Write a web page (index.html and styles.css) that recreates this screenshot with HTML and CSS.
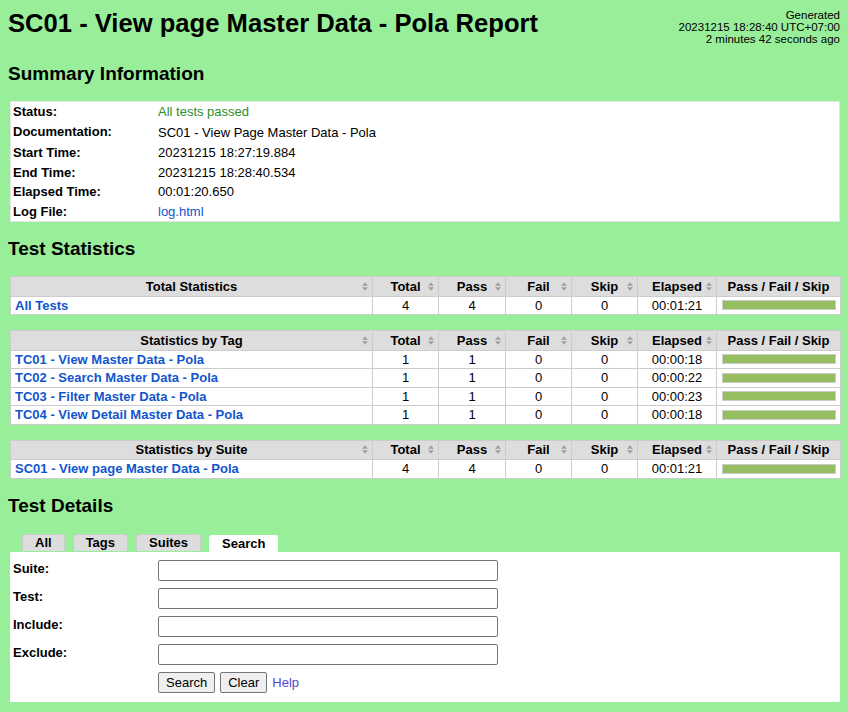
FILE: index.html
```html
<!DOCTYPE html>
<html>
<head>
<meta charset="utf-8">
<title>SC01 - View page Master Data - Pola Report</title>
<link rel="stylesheet" href="styles.css">
</head>
<body>
<div class="header">
  <h1>SC01 - View page Master Data - Pola Report</h1>
  <div class="generated">Generated<br>20231215 18:28:40 UTC+07:00<br>2 minutes 42 seconds ago</div>
</div>

<h2>Summary Information</h2>
<table class="details">
  <tr><th>Status:</th><td class="pass">All tests passed</td></tr>
  <tr class="doc"><th>Documentation:</th><td><div class="doc-text">SC01 - View Page Master Data - Pola</div></td></tr>
  <tr><th>Start Time:</th><td>20231215 18:27:19.884</td></tr>
  <tr><th>End Time:</th><td>20231215 18:28:40.534</td></tr>
  <tr><th>Elapsed Time:</th><td>00:01:20.650</td></tr>
  <tr><th>Log File:</th><td><a href="#">log.html</a></td></tr>
</table>

<h2>Test Statistics</h2>
<table class="statistics">
  <colgroup><col class="c-name"><col class="c-num"><col class="c-pass"><col class="c-num"><col class="c-num"><col class="c-el"><col class="c-graph"></colgroup>
  <tr>
    <th class="sortable">Total Statistics<svg class="sort" viewBox="0 0 7 10"><path d="M0 4L3.5 0L7 4Z M0 6L3.5 10L7 6Z"/></svg></th>
    <th class="sortable">Total<svg class="sort" viewBox="0 0 7 10"><path d="M0 4L3.5 0L7 4Z M0 6L3.5 10L7 6Z"/></svg></th>
    <th class="sortable">Pass<svg class="sort" viewBox="0 0 7 10"><path d="M0 4L3.5 0L7 4Z M0 6L3.5 10L7 6Z"/></svg></th>
    <th class="sortable">Fail<svg class="sort" viewBox="0 0 7 10"><path d="M0 4L3.5 0L7 4Z M0 6L3.5 10L7 6Z"/></svg></th>
    <th class="sortable">Skip<svg class="sort" viewBox="0 0 7 10"><path d="M0 4L3.5 0L7 4Z M0 6L3.5 10L7 6Z"/></svg></th>
    <th class="sortable">Elapsed<svg class="sort" viewBox="0 0 7 10"><path d="M0 4L3.5 0L7 4Z M0 6L3.5 10L7 6Z"/></svg></th>
    <th>Pass / Fail / Skip</th>
  </tr>
  <tr><td class="name"><a href="#">All Tests</a></td><td>4</td><td>4</td><td>0</td><td>0</td><td>00:01:21</td><td><div class="graph"><div class="pass-bar"></div></div></td></tr>
</table>

<table class="statistics">
  <colgroup><col class="c-name"><col class="c-num"><col class="c-pass"><col class="c-num"><col class="c-num"><col class="c-el"><col class="c-graph"></colgroup>
  <tr>
    <th class="sortable">Statistics by Tag<svg class="sort" viewBox="0 0 7 10"><path d="M0 4L3.5 0L7 4Z M0 6L3.5 10L7 6Z"/></svg></th>
    <th class="sortable">Total<svg class="sort" viewBox="0 0 7 10"><path d="M0 4L3.5 0L7 4Z M0 6L3.5 10L7 6Z"/></svg></th>
    <th class="sortable">Pass<svg class="sort" viewBox="0 0 7 10"><path d="M0 4L3.5 0L7 4Z M0 6L3.5 10L7 6Z"/></svg></th>
    <th class="sortable">Fail<svg class="sort" viewBox="0 0 7 10"><path d="M0 4L3.5 0L7 4Z M0 6L3.5 10L7 6Z"/></svg></th>
    <th class="sortable">Skip<svg class="sort" viewBox="0 0 7 10"><path d="M0 4L3.5 0L7 4Z M0 6L3.5 10L7 6Z"/></svg></th>
    <th class="sortable">Elapsed<svg class="sort" viewBox="0 0 7 10"><path d="M0 4L3.5 0L7 4Z M0 6L3.5 10L7 6Z"/></svg></th>
    <th>Pass / Fail / Skip</th>
  </tr>
  <tr><td class="name"><a href="#">TC01 - View Master Data - Pola</a></td><td>1</td><td>1</td><td>0</td><td>0</td><td>00:00:18</td><td><div class="graph"><div class="pass-bar"></div></div></td></tr>
  <tr><td class="name"><a href="#">TC02 - Search Master Data - Pola</a></td><td>1</td><td>1</td><td>0</td><td>0</td><td>00:00:22</td><td><div class="graph"><div class="pass-bar"></div></div></td></tr>
  <tr><td class="name"><a href="#">TC03 - Filter Master Data - Pola</a></td><td>1</td><td>1</td><td>0</td><td>0</td><td>00:00:23</td><td><div class="graph"><div class="pass-bar"></div></div></td></tr>
  <tr><td class="name"><a href="#">TC04 - View Detail Master Data - Pola</a></td><td>1</td><td>1</td><td>0</td><td>0</td><td>00:00:18</td><td><div class="graph"><div class="pass-bar"></div></div></td></tr>
</table>

<table class="statistics">
  <colgroup><col class="c-name"><col class="c-num"><col class="c-pass"><col class="c-num"><col class="c-num"><col class="c-el"><col class="c-graph"></colgroup>
  <tr>
    <th class="sortable">Statistics by Suite<svg class="sort" viewBox="0 0 7 10"><path d="M0 4L3.5 0L7 4Z M0 6L3.5 10L7 6Z"/></svg></th>
    <th class="sortable">Total<svg class="sort" viewBox="0 0 7 10"><path d="M0 4L3.5 0L7 4Z M0 6L3.5 10L7 6Z"/></svg></th>
    <th class="sortable">Pass<svg class="sort" viewBox="0 0 7 10"><path d="M0 4L3.5 0L7 4Z M0 6L3.5 10L7 6Z"/></svg></th>
    <th class="sortable">Fail<svg class="sort" viewBox="0 0 7 10"><path d="M0 4L3.5 0L7 4Z M0 6L3.5 10L7 6Z"/></svg></th>
    <th class="sortable">Skip<svg class="sort" viewBox="0 0 7 10"><path d="M0 4L3.5 0L7 4Z M0 6L3.5 10L7 6Z"/></svg></th>
    <th class="sortable">Elapsed<svg class="sort" viewBox="0 0 7 10"><path d="M0 4L3.5 0L7 4Z M0 6L3.5 10L7 6Z"/></svg></th>
    <th>Pass / Fail / Skip</th>
  </tr>
  <tr><td class="name"><a href="#">SC01 - View page Master Data - Pola</a></td><td>4</td><td>4</td><td>0</td><td>0</td><td>00:01:21</td><td><div class="graph"><div class="pass-bar"></div></div></td></tr>
</table>

<h2>Test Details</h2>
<div class="tabs">
  <div class="tab">All</div>
  <div class="tab">Tags</div>
  <div class="tab">Suites</div>
  <div class="tab active">Search</div>
</div>
<div class="panel">
  <form class="search">
    <label>Suite:</label><input type="text">
    <label>Test:</label><input type="text">
    <label>Include:</label><input type="text">
    <label>Exclude:</label><input type="text">
    <span></span>
    <div class="buttons">
      <button type="button">Search</button>
      <button type="button">Clear</button>
      <a class="help" href="#">Help</a>
    </div>
  </form>
</div>
</body>
</html>
```

FILE: styles.css
```css
html, body {
  background: #99ee99;
}
body {
  margin: 0;
  padding: 0 8px;
  color: #000;
  font-family: "Liberation Sans", Arial, Helvetica, sans-serif;
  font-size: 13px;
}
a {
  color: #15c;
  text-decoration: none;
}
.header {
  display: flex;
  justify-content: space-between;
  align-items: flex-start;
  padding-top: 8px;
  margin-bottom: 18px;
}
h1 {
  margin: 0;
  font-size: 25.6px;
  line-height: 30px;
  font-weight: bold;
  white-space: nowrap;
}
.generated {
  font-size: 11.5px;
  line-height: 12px;
  text-align: right;
  white-space: nowrap;
  padding-top: 1px;
}
h2 {
  margin: 16px 0;
  font-size: 19px;
  line-height: 22px;
  font-weight: bold;
}

/* summary */
.details {
  margin-left: 2px;
  width: 830px;
  background: #fff;
  border-collapse: collapse;
  border: 1px solid #e4e4e4;
  margin-bottom: 12px;
}
.details th {
  width: 137px;
  text-align: left;
  vertical-align: top;
  padding: 2px 4px 2px 2px;
  line-height: 15.5px;
  font-weight: bold;
  white-space: nowrap;
}
.details td {
  vertical-align: top;
  padding: 2px 4px;
  line-height: 15.5px;
}
.details .doc td {
  padding-top: 3px;
  padding-bottom: 3px;
}
.pass {
  color: #2c8f2c;
}

/* statistics */
.statistics {
  margin-left: 2px;
  width: 830px;
  table-layout: fixed;
  border-collapse: collapse;
  background: #fff;
  border: 1px solid #ccc;
  margin-bottom: 15px;
}
.c-name { width: 362px; }
.c-num { width: 66px; }
.c-pass { width: 67px; }
.c-el { width: 79px; }
.c-graph { width: 124px; }
.statistics th {
  position: relative;
  background: #ddd;
  border: 1px solid #ccc;
  font-weight: bold;
  text-align: center;
  padding: 1.5px 4px;
  line-height: 15.5px;
  white-space: nowrap;
}
.statistics td {
  border: 1px solid #ccc;
  text-align: center;
  padding: 1px 4px;
  line-height: 15.5px;
  white-space: nowrap;
}
.statistics td.name {
  text-align: left;
  font-weight: bold;
}
.sort {
  position: absolute;
  right: 4px;
  top: 50%;
  width: 6px;
  height: 9px;
  margin-top: -4.5px;
  fill: #a0a0a0;
}
.graph {
  width: 112px;
  height: 8px;
  margin: 0 auto;
  border: 1px solid #ccc;
  background: #fff;
}
.pass-bar {
  height: 100%;
  background: #97bd61;
}

/* details */
.tabs {
  display: flex;
  gap: 8px;
  padding: 1px 0 0 12px;
  margin-left: 2px;
}
.tab {
  background: #ddd;
  border: 1px solid #ccc;
  border-bottom: none;
  border-radius: 3px 3px 0 0;
  padding: 0 12px;
  font-weight: bold;
  line-height: 16px;
  height: 16px;
}
.tab.active {
  background: #fff;
  border-color: #fff;
  margin-top: 1px;
  height: 16px;
}
.panel {
  margin-left: 2px;
  width: 830px;
  background: #fff;
  padding: 8px 0 9px 3px;
  box-sizing: border-box;
}
.search {
  display: grid;
  grid-template-columns: 145px 340px;
  row-gap: 7px;
  align-items: start;
  margin: 0;
}
.search label {
  font-weight: bold;
  line-height: 15px;
  padding-top: 1px;
}
.search input {
  box-sizing: border-box;
  width: 340px;
  height: 21px;
  margin: 0;
  padding: 1px 2px;
  border: 1px solid #767676;
  border-radius: 2px;
  font-family: "Liberation Sans", Arial, sans-serif;
  font-size: 13px;
}
.buttons {
  display: flex;
  align-items: center;
  gap: 5px;
}
.buttons button {
  box-sizing: border-box;
  height: 21px;
  margin: 0;
  padding: 1px 7px;
  border: 1px solid #767676;
  border-radius: 2px;
  background: #efefef;
  font-family: "Liberation Sans", Arial, sans-serif;
  font-size: 13px;
  color: #000;
}
.help {
  color: #5046d6;
}
```
